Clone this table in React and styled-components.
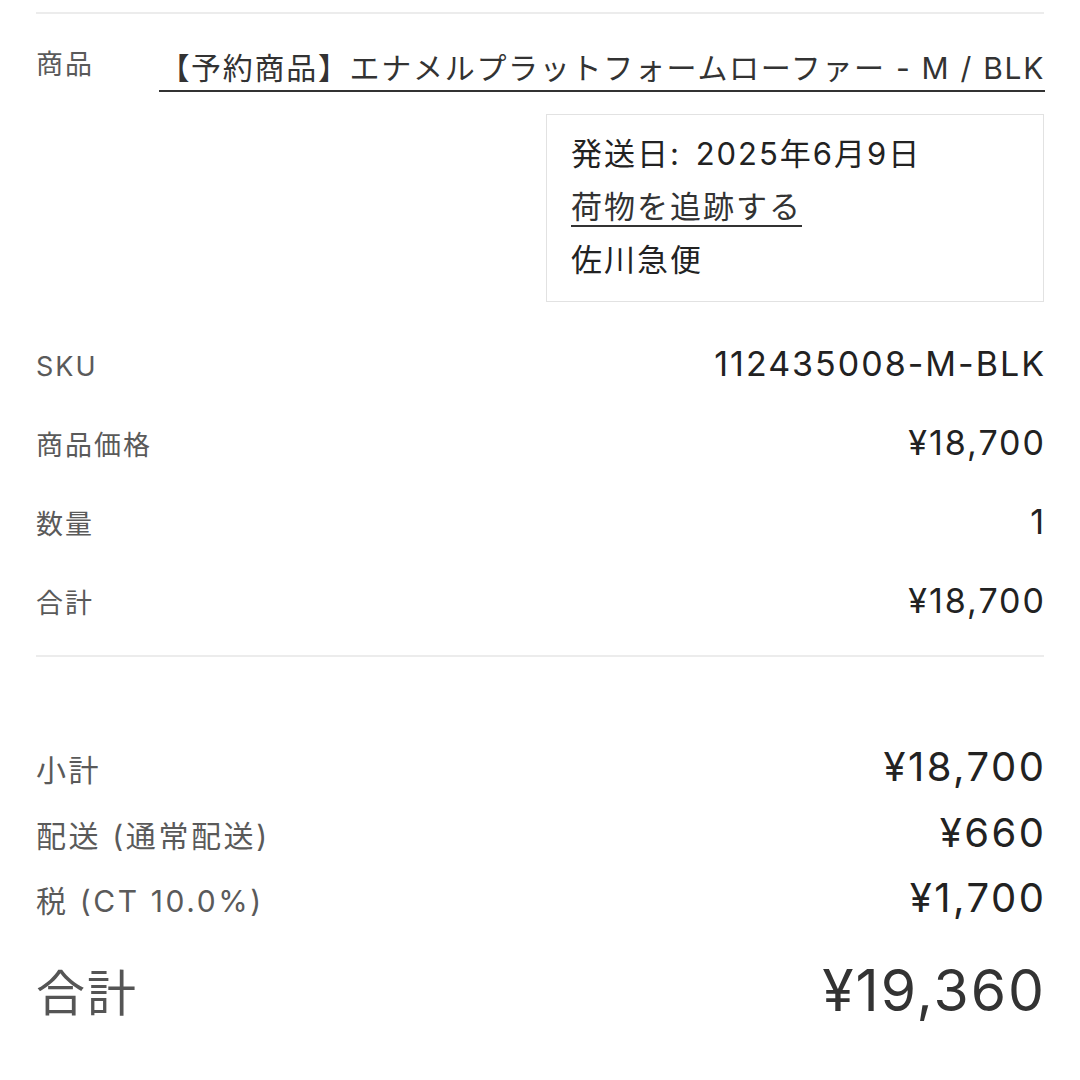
import React from "react";
import styled, { createGlobalStyle } from "styled-components";

const GlobalStyle = createGlobalStyle`
  html, body {
    margin: 0;
    padding: 0;
    background: #ffffff;
  }
  body {
    font-family: "Inter", "Noto Sans CJK JP", sans-serif;
    -webkit-font-smoothing: antialiased;
  }
`;

const Page = styled.div`
  width: 1080px;
  height: 1080px;
  box-sizing: border-box;
  padding: 12px 36px 0 36px;
  overflow: hidden;
  background: #fff;
`;

const Divider = styled.div`
  height: 2px;
  background: #ececec;
  margin-top: ${(p) => p.$top || 0}px;
`;

const ProductRow = styled.div`
  display: flex;
  justify-content: space-between;
  align-items: flex-start;
  padding-top: 36px;
`;

const Label = styled.span`
  font-size: ${(p) => p.$size || 27}px;
  color: ${(p) => p.$color || "#5a5a5a"};
  letter-spacing: ${(p) => p.$ls || 2}px;
  white-space: nowrap;
`;

const ProductLabel = styled(Label)`
  line-height: 30px;
`;

const ProductLink = styled.a`
  display: inline-block;
  font-size: 30px;
  line-height: 35px;
  margin-top: 1px;
  padding-bottom: 4px;
  color: #333;
  text-decoration: none;
  border-bottom: 2px solid #333;
  letter-spacing: 1.7px;
  margin-right: -1px;
  white-space: nowrap;
`;

const ShipBox = styled.div`
  margin: 22px 0 0 auto;
  width: 498px;
  box-sizing: border-box;
  border: 1px solid #e2e2e2;
  padding: 12px 24px 15px;
  font-size: 31px;
  line-height: 53px;
  color: #222;
  letter-spacing: 2px;
  word-spacing: 4px;
`;

const Track = styled.a`
  color: #333;
  text-decoration: underline;
  text-decoration-thickness: 2px;
  text-underline-offset: 7px;
`;

const Rows = styled.div`
  margin-top: 22px;
`;

const Row = styled.div`
  display: flex;
  justify-content: space-between;
  align-items: baseline;
  height: ${(p) => p.$h}px;
  line-height: ${(p) => p.$h}px;
`;

const Value = styled.span`
  font-size: ${(p) => p.$size || 34}px;
  color: ${(p) => p.$color || "#222"};
  letter-spacing: ${(p) => p.$ls || 2}px;
  margin-right: -${(p) => p.$ls || 2}px;
  white-space: nowrap;
`;

const Summary = styled.div`
  margin-top: 77px;
`;

const TotalRow = styled(Row)`
  margin-top: 10px;
`;

const details = [
  ["SKU", "112435008-M-BLK"],
  ["商品価格", "¥18,700"],
  ["数量", "1"],
  ["合計", "¥18,700"],
];

const sums = [
  ["小計", "¥18,700"],
  ["配送 (通常配送)", "¥660"],
  ["税 (CT 10.0%)", "¥1,700"],
];

export default function App() {
  return (
    <>
      <GlobalStyle />
      <Page>
        <Divider />
        <ProductRow>
          <ProductLabel>商品</ProductLabel>
          <ProductLink href="#">【予約商品】エナメルプラットフォームローファー - M / BLK</ProductLink>
        </ProductRow>
        <ShipBox>
          <div>発送日: 2025年6月9日</div>
          <div>
            <Track href="#">荷物を追跡する</Track>
          </div>
          <div>佐川急便</div>
        </ShipBox>
        <Rows>
          {details.map(([l, v]) => (
            <Row key={l} $h={79}>
              <Label>{l}</Label>
              <Value>{v}</Value>
            </Row>
          ))}
        </Rows>
        <Divider $top={15} />
        <Summary>
          {sums.map(([l, v]) => (
            <Row key={l} $h={65.5}>
              <Label $size={30} $ls={2.6}>{l}</Label>
              <Value $size={40} $ls={2.5}>{v}</Value>
            </Row>
          ))}
          <TotalRow $h={100}>
            <Label $size={49} $color="#555">合計</Label>
            <Value $size={57} $color="#333">¥19,360</Value>
          </TotalRow>
        </Summary>
      </Page>
    </>
  );
}
